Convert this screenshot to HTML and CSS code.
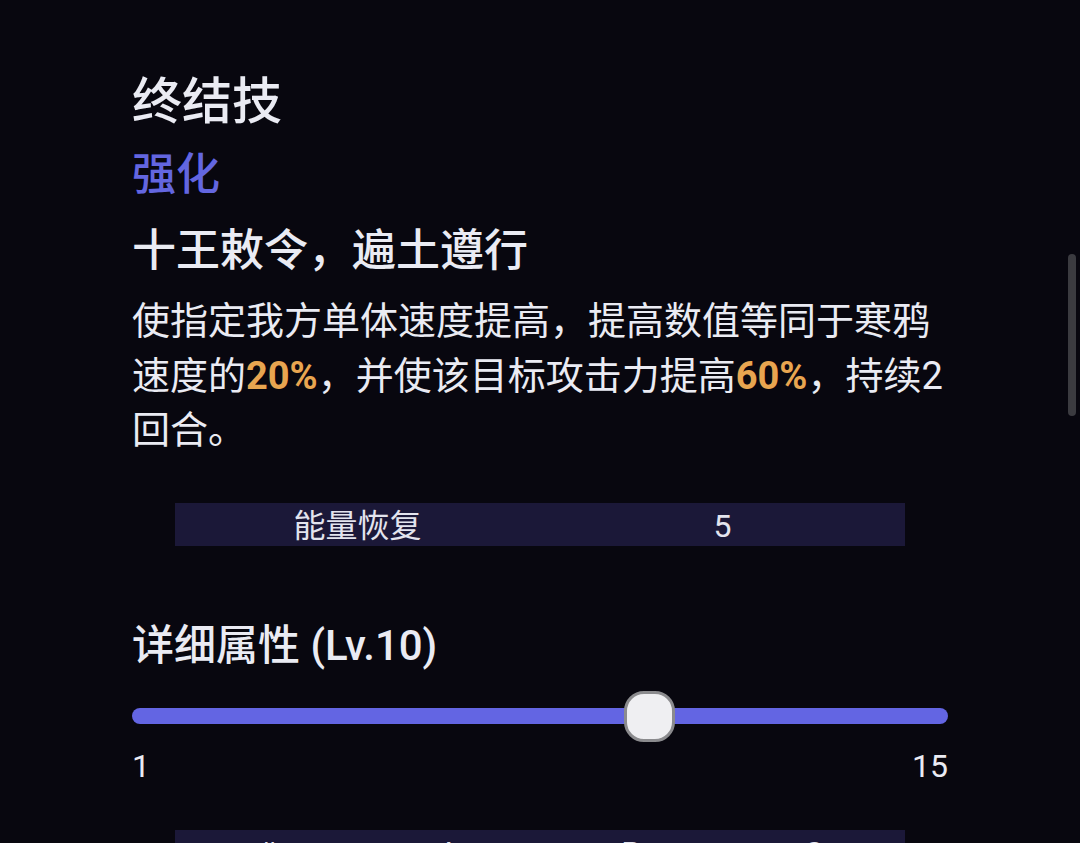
FILE: index.html
```html
<!DOCTYPE html>
<html lang="zh-CN">

<head>
    <meta charset="utf-8">
    <meta name="viewport" content="width=device-width, initial-scale=1.0">
    <title>寒鸦 - 终结技</title>
    <link rel="stylesheet" href="styles.css">
</head>

<body>
    <main class="skill">
        <h2 class="skill-type">终结技</h2>
        <p class="skill-tag">强化</p>
        <h3 class="skill-name">十王敕令，遍土遵行</h3>
        <p class="skill-desc">使指定我方单体速度提高，提高数值等同于寒鸦速度的<b class="num">20%</b>，并使该目标攻击力提高<b class="num">60%</b>，持续2回合。</p>

        <table class="stat-table">
            <tr>
                <td>能量恢复</td>
                <td>5</td>
            </tr>
        </table>

        <h3 class="level-title">详细属性 <span class="lv">(Lv.10)</span></h3>
        <input class="level-slider" type="range" min="1" max="15" value="10">
        <div class="level-range">
            <span>1</span>
            <span>15</span>
        </div>

        <table class="stat-table level-table">
            <tr>
                <th>#</th>
                <th>A</th>
                <th>B</th>
                <th>C</th>
            </tr>
        </table>
    </main>

    <div class="scroll-thumb"></div>
</body>

</html>
```

FILE: styles.css
```css
html {
    margin: 0;
}

body {
    margin: 0;
    background-color: #08070f;
    color: #eaebf3;
    font-family: Roboto, "Noto Sans CJK SC", sans-serif;
    overflow: hidden;
}

.skill {
    width: 816px;
    margin: 0 auto;
    padding-top: 70px;
}

.skill-type {
    font-size: 50px;
    font-weight: 500;
    line-height: 65px;
    margin: 0;
}

.skill-tag {
    color: #6366e0;
    font-size: 44px;
    font-weight: 500;
    line-height: 60px;
    margin: 10px 0 0;
}

.skill-name {
    font-size: 44px;
    font-weight: 500;
    line-height: 60px;
    margin: 16px 0 0;
}

.skill-desc {
    font-size: 38px;
    line-height: 54.5px;
    margin: 13px 0 0;
}

.num {
    color: #e8a550;
    font-weight: 700;
}

.stat-table {
    width: 730px;
    margin: 45px auto 0;
    border-collapse: collapse;
    table-layout: fixed;
}

.stat-table td,
.stat-table th {
    background-color: #1b1838;
    color: #e3e4ee;
    font-size: 32px;
    font-weight: 400;
    line-height: 40px;
    padding: 3px 0 0;
    text-align: center;
}

.level-title {
    font-size: 42px;
    font-weight: 500;
    line-height: 58px;
    margin: 71px 0 0;
}

.level-slider {
    -webkit-appearance: none;
    appearance: none;
    display: block;
    width: 100%;
    height: 51px;
    margin: 16px 0 0;
    background: transparent;
}

.level-slider::-webkit-slider-runnable-track {
    height: 16px;
    border-radius: 8px;
    background-color: #6365e3;
}

.level-slider::-webkit-slider-thumb {
    -webkit-appearance: none;
    box-sizing: border-box;
    width: 51px;
    height: 51px;
    margin-top: -17.5px;
    border: 3px solid #8b8b8e;
    border-radius: 20px;
    background-color: #efeff2;
}

.level-range {
    display: flex;
    justify-content: space-between;
    font-size: 32px;
    line-height: 36px;
    margin-top: 6px;
}

.level-table {
    margin-top: 46px;
}

.scroll-thumb {
    position: fixed;
    right: 4px;
    top: 254px;
    width: 8px;
    height: 162px;
    border-radius: 4px;
    background-color: #3b3b40;
}
```
